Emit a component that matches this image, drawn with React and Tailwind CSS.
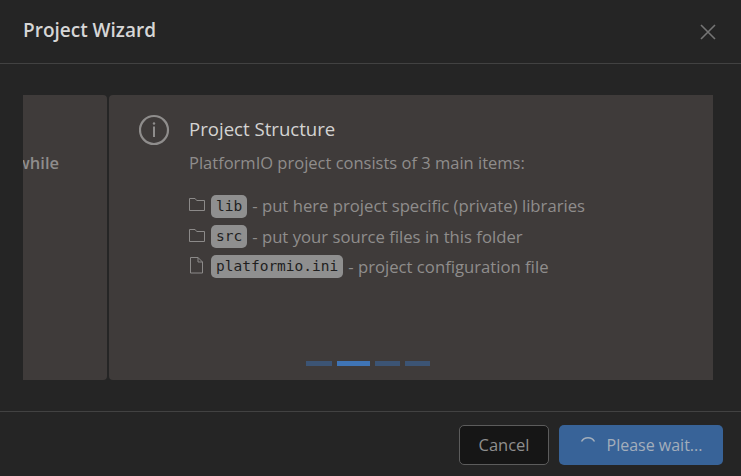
import React from "react";

function FolderIcon() {
    return (
        <svg width="16" height="16" viewBox="0 0 16 16" fill="none" stroke="#8c8a89" strokeWidth="1" className="shrink-0 -mt-[4px]">
            <path d="M0.5 14.5V2.5h5.6l1.6 2h7.8v10z" />
        </svg>
    );
}

function FileIcon() {
    return (
        <svg width="16" height="18" viewBox="0 0 16 18" fill="none" stroke="#8c8a89" strokeWidth="1" className="shrink-0 -mt-[4px]">
            <path d="M1.5 1.5h7.5l4.5 4.5v11h-12z" />
            <path d="M9 1.5v4.5h4.5" />
        </svg>
    );
}

function Item({ icon, code, text }) {
    return (
        <div className="flex items-center h-[30.4px]">
            <div className="w-[22px]">{icon}</div>
            <code className="bg-[#8f8f8f] text-[#1f1f1f] rounded-[5px] px-[5px] h-[23px] leading-[23px] text-[14.5px] font-['DejaVu_Sans_Mono',monospace]">{code}</code>
            <span className="ml-[5px] text-[16.7px] -mt-[1px]">- {text}</span>
        </div>
    );
}

export default function App() {
    return (
        <div className="w-[741px] h-[476px] bg-[#252525] flex flex-col overflow-hidden font-['Open_Sans',sans-serif]">
            <div className="h-[64px] shrink-0 border-b border-[#424242] flex items-center justify-between pl-[23px] pr-[25px]">
                <h2 className="text-[19px] font-semibold text-[#d6d6d6] -mt-[2px]">Project Wizard</h2>
                <svg width="16" height="16" viewBox="0 0 16 16" stroke="#757575" strokeWidth="1.6">
                    <path d="M1 1l14 14M15 1L1 15" />
                </svg>
            </div>

            <div className="flex-1 px-[23px] pr-[28px] py-[31px] flex">
                <div className="w-[84px] shrink-0 bg-[#3f3b3a] rounded-r-[4px] flex justify-end pr-[48px] pt-[54px] overflow-hidden">
                    <span className="text-[16.5px] font-semibold text-[#8f8d8c] leading-[28px]">while</span>
                </div>
                <div className="flex-1 ml-[2px] bg-[#3f3b3a] rounded-l-[4px] flex flex-col pl-[30px] pt-[19px] pb-[14px] text-[#8f8d8c] text-[16.5px]">
                    <div className="flex flex-1">
                        <svg width="32" height="32" viewBox="0 0 32 32" fill="none" stroke="#8f8d8c" className="shrink-0">
                            <circle cx="15" cy="16" r="14" strokeWidth="2.2" />
                            <circle cx="15" cy="9.5" r="1.2" fill="#8f8d8c" stroke="none" />
                            <path d="M15 12.5v10.5" strokeWidth="2" />
                        </svg>
                        <div className="ml-[18px]">
                            <h3 className="text-[18.6px] text-[#d4d3d2] leading-[30px]">Project Structure</h3>
                            <p className="leading-[24px] mt-[7px]">PlatformIO project consists of 3 main items:</p>
                            <div className="mt-[16px]">
                                <Item icon={<FolderIcon />} code="lib" text="put here project specific (private) libraries" />
                                <Item icon={<FolderIcon />} code="src" text="put your source files in this folder" />
                                <Item icon={<FileIcon />} code="platformio.ini" text="project configuration file" />
                            </div>
                        </div>
                    </div>
                    <div className="flex justify-center gap-[5px] h-[5px] pr-[116px]">
                        <div className="w-[26px] bg-[#3c5474]" />
                        <div className="w-[33px] bg-[#3f74b5]" />
                        <div className="w-[25px] bg-[#3c5474]" />
                        <div className="w-[25px] bg-[#3c5474]" />
                    </div>
                </div>
            </div>

            <div className="h-[65px] shrink-0 border-t border-[#424242] flex items-start justify-end gap-[10px] pt-[13px] pr-[18px]">
                <button className="w-[90px] h-[40px] bg-[#161616] border border-[#5c5c5c] rounded-[5px] text-[16.5px] text-[#8f8f8f]">Cancel</button>
                <button className="w-[164px] h-[40px] bg-[#386398] rounded-[5px] text-[16px] text-[#a3aebb] flex items-center justify-center">
                    <svg width="16" height="16" viewBox="0 0 16 16" fill="none" stroke="#a3aebb" strokeWidth="1.5" className="mr-[11px] mb-[3px]">
                        <path d="M1.5 5.5A7.5 7.5 0 0 1 14.5 5.5" />
                    </svg>
                    Please wait...
                </button>
            </div>
        </div>
    );
}
